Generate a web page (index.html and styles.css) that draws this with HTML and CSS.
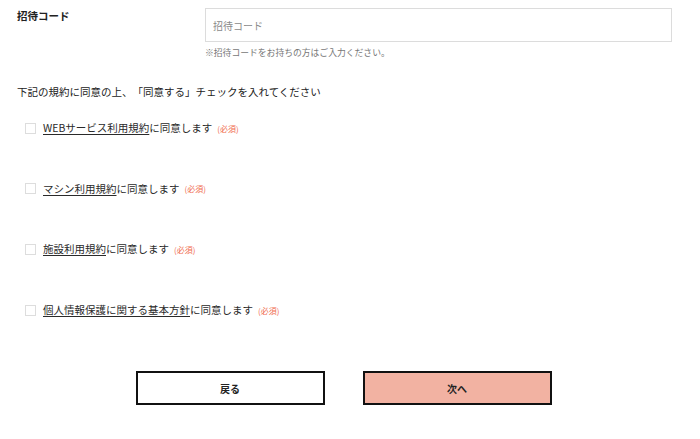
FILE: index.html
```html
<!DOCTYPE html>
<html lang="ja">
<head>
<meta charset="utf-8">
<title>招待コード</title>
<link rel="stylesheet" href="styles.css">
</head>
<body>
<form class="form">
  <div class="field-row">
    <div class="field-label">招待コード</div>
    <div class="field-body">
      <input class="text-input" type="text" placeholder="招待コード">
      <p class="help">※招待コードをお持ちの方はご入力ください。</p>
    </div>
  </div>

  <p class="lead">下記の規約に同意の上、「同意する」チェックを入れてください</p>

  <ul class="agree-list">
    <li class="agree"><span class="box"></span><span class="agree-text"><a class="doc" href="#">WEBサービス利用規約</a>に同意します</span><span class="req">(必須)</span></li>
    <li class="agree"><span class="box"></span><span class="agree-text"><a class="doc" href="#">マシン利用規約</a>に同意します</span><span class="req">(必須)</span></li>
    <li class="agree"><span class="box"></span><span class="agree-text"><a class="doc" href="#">施設利用規約</a>に同意します</span><span class="req">(必須)</span></li>
    <li class="agree"><span class="box"></span><span class="agree-text"><a class="doc" href="#">個人情報保護に関する基本方針</a>に同意します</span><span class="req">(必須)</span></li>
  </ul>

  <div class="actions">
    <button type="button" class="btn btn-back">戻る</button>
    <button type="button" class="btn btn-next">次へ</button>
  </div>
</form>
</body>
</html>
```

FILE: styles.css
```css
html, body {
  margin: 0;
  padding: 0;
  background: #ffffff;
}

body {
  font-family: "Noto Sans CJK JP", "Noto Sans", sans-serif;
  color: #333333;
  text-spacing-trim: space-all;
}

.form {
  width: 655px;
  margin: 0 0 0 17px;
  padding-top: 8px;
}

.field-row {
  display: grid;
  grid-template-columns: 188px 467px;
}

.field-label {
  font-size: 10.5px;
  font-weight: bold;
  line-height: 16px;
  color: #222222;
}

.text-input {
  display: block;
  box-sizing: border-box;
  width: 467px;
  height: 34px;
  margin: 0;
  padding: 0 7px;
  border: 1px solid #dcdcdc;
  border-radius: 0;
  font-family: inherit;
  font-size: 10px;
  color: #333333;
  outline: none;
}

.text-input::placeholder {
  color: #8a8a8a;
}

.help {
  margin: 4px 0 0;
  font-size: 8.8px;
  line-height: 14px;
  color: #777777;
}

.lead {
  margin: 24px 0 0;
  font-size: 10.5px;
  line-height: 16px;
  color: #222222;
}

.agree-list {
  list-style: none;
  margin: 20px 0 0;
  padding: 0 0 0 8px;
}

.agree {
  display: flex;
  align-items: center;
  height: 16px;
  margin-bottom: 44.7px;
}

.agree:last-child {
  margin-bottom: 0;
}

.box {
  box-sizing: border-box;
  width: 11px;
  height: 11px;
  border: 1px solid #dddddd;
  margin-right: 7px;
  flex: none;
}

.agree-text {
  font-size: 10.5px;
  line-height: 16px;
  color: #2a2a2a;
}

.doc {
  color: #2a2a2a;
  text-decoration: underline;
  text-underline-offset: 2px;
}

.req {
  margin-left: 5px;
  font-size: 8px;
  color: #f06b4d;
}

.actions {
  display: flex;
  justify-content: center;
  gap: 38px;
  margin-top: 53px;
  padding-right: 2px;
}

.btn {
  box-sizing: border-box;
  width: 189px;
  height: 34px;
  border: 2px solid #111111;
  border-radius: 0;
  font-family: inherit;
  font-size: 10px;
  font-weight: bold;
  color: #222222;
  cursor: pointer;
}

.btn-back {
  background: #ffffff;
}

.btn-next {
  background: #f2b2a2;
}
```
